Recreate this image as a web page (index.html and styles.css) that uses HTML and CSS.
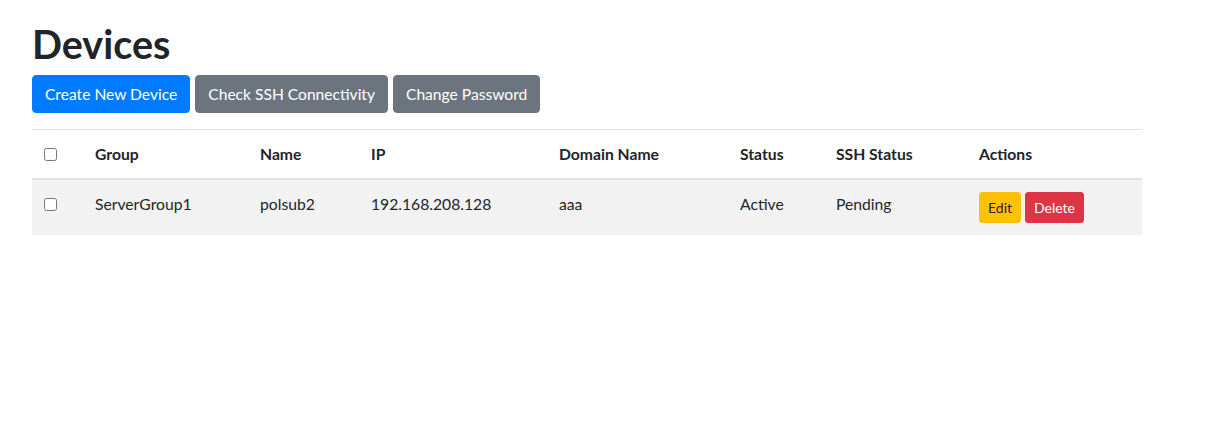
FILE: index.html
```html
<!DOCTYPE html>
<html>
<head>
<meta charset="utf-8">
<link rel="stylesheet" href="styles.css">
</head>
<body>
<div class="page">
  <h1 class="title">Devices</h1>
  <div class="toolbar">
    <button class="btn btn-primary">Create New Device</button>
    <button class="btn btn-secondary">Check SSH Connectivity</button>
    <button class="btn btn-secondary">Change Password</button>
  </div>
  <table class="devices">
    <colgroup>
      <col class="c-check"><col class="c-group"><col class="c-name"><col class="c-ip"><col class="c-domain"><col class="c-status"><col class="c-ssh"><col class="c-actions">
    </colgroup>
    <thead>
      <tr>
        <th><input type="checkbox" class="chk"></th>
        <th>Group</th>
        <th>Name</th>
        <th>IP</th>
        <th>Domain Name</th>
        <th>Status</th>
        <th>SSH Status</th>
        <th>Actions</th>
      </tr>
    </thead>
    <tbody>
      <tr class="odd">
        <td><input type="checkbox" class="chk"></td>
        <td>ServerGroup1</td>
        <td>polsub2</td>
        <td>192.168.208.128</td>
        <td>aaa</td>
        <td>Active</td>
        <td>Pending</td>
        <td class="actions"><button class="btn-sm btn-warning">Edit</button><button class="btn-sm btn-danger">Delete</button></td>
      </tr>
    </tbody>
  </table>
</div>
</body>
</html>
```

FILE: styles.css
```css
html, body {
  margin: 0;
  padding: 0;
  background: #fff;
}
body {
  font-family: Lato, "Noto Sans", "Liberation Sans", sans-serif;
  font-size: 15.7px;
  line-height: 24px;
  color: #212529;
}
.page {
  padding: 20px 32px 0 32px;
  width: 1110px;
}
.title {
  margin: 0 0 7px 0;
  font-size: 39.5px;
  line-height: 48px;
  font-weight: 700;
}
.toolbar {
  display: flex;
  gap: 5px;
  margin-bottom: 16px;
}
.btn {
  font-family: inherit;
  font-size: 15.6px;
  line-height: 24px;
  padding: 6px 12px;
  border: 1px solid transparent;
  border-radius: 4px;
  color: #fff;
  cursor: pointer;
}
.btn-primary { background: #007bff; border-color: #007bff; }
.btn-secondary { background: #6c757d; border-color: #6c757d; }
.devices {
  width: 1110px;
  border-collapse: collapse;
  table-layout: fixed;
}
.c-check { width: 51px; }
.c-group { width: 165px; }
.c-name { width: 111px; }
.c-ip { width: 188px; }
.c-domain { width: 181px; }
.c-status { width: 96px; }
.c-ssh { width: 143px; }
.c-actions { width: 175px; }
.devices th, .devices td {
  text-align: left;
  vertical-align: top;
  padding: 12px;
  border-top: 1px solid #dee2e6;
}
.devices th {
  font-weight: 700;
}
.devices thead th {
  border-bottom: 2px solid #dee2e6;
}
.devices tbody td {
  border-top: none;
}
.odd td { background: #f2f2f2; }
.chk {
  width: 13px;
  height: 13px;
  margin: 6px 0 0 0;
  vertical-align: top;
}
.actions {
  display: flex;
  gap: 4px;
}
.btn-sm {
  font-family: inherit;
  font-size: 14px;
  line-height: 21px;
  padding: 4px 8px;
  border: 1px solid transparent;
  border-radius: 3px;
  cursor: pointer;
}
.btn-warning { background: #ffc107; border-color: #ffc107; color: #212529; }
.btn-danger { background: #dc3545; border-color: #dc3545; color: #fff; }
```
